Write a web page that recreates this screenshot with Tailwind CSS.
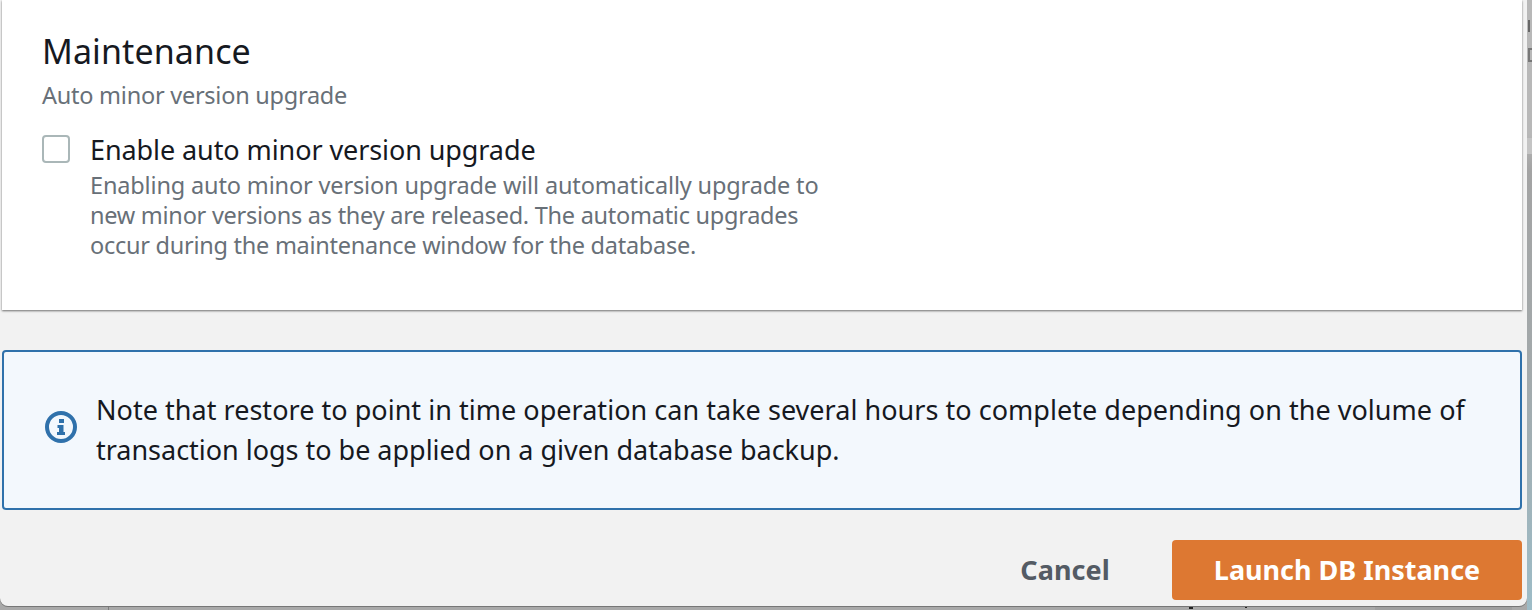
<!DOCTYPE html>
<html>
<head>
<meta charset="utf-8">
<script src="https://cdn.jsdelivr.net/npm/@tailwindcss/browser@4"></script>
</head>
<body class="m-0 overflow-hidden">
<div class="w-[1532px] h-[610px] bg-[#a9a9a9] font-['Noto_Sans',sans-serif] overflow-hidden relative">
  <!-- page behind the dialog, showing at its right and bottom edges -->
  <div class="absolute left-[1527px] top-0 w-[5px] h-[610px] bg-[linear-gradient(to_bottom,#b8b8b8_0%,#b8b8b8_22%,#a3a3a3_28%,#a3a9ab_60%,#9dbcc7_100%)]"></div>
  <div class="absolute left-[1528px] top-[20px] w-[2px] h-[12px] bg-[#666]"></div>
  <div class="absolute left-[1528px] top-[48px] w-[4px] h-[14px] border-2 border-r-0 border-[#777]"></div>
  <div class="absolute left-[1527px] top-[138px] w-[5px] h-[16px] bg-[#c4c4c4]"></div>
  <div class="absolute left-[1375px] top-[606px] w-[137px] h-[4px] bg-[#a0a0a0]"></div>
  <div class="absolute left-[108px] top-[606px] w-px h-[4px] bg-[#7e7e7e]"></div>
  <div class="absolute left-[1189px] top-[606px] w-[4px] h-[3px] bg-[#222]"></div>
  <div class="absolute left-[1245px] top-[606px] w-[2px] h-[2px] bg-[#222]"></div>
  <div class="relative w-[1527px] h-[606px] bg-[#f2f2f2] rounded-b-[8px] shadow-[0_1px_0_#777] pl-[2px] pr-[5px] flex flex-col">
    <section class="h-[310px] w-[1520px] bg-white shadow-[0_1px_2px_rgba(0,0,0,0.55)] pl-[40px] pt-[29px]">
      <h2 class="text-[34px] leading-[44px] text-[#16191f] tracking-[0.1px]">Maintenance</h2>
      <p class="mt-[7px] text-[23.5px] leading-[30px] text-[#687078] tracking-[-0.25px]">Auto minor version upgrade</p>
      <div class="mt-[22px] flex gap-[20px]">
        <div class="mt-[3px] w-[28px] h-[28px] bg-white border-2 border-[#aab7b8] rounded-[4px]"></div>
        <div>
          <div class="text-[27px] leading-[36px] text-[#16191f] tracking-[-0.09px] whitespace-nowrap">Enable auto minor version upgrade</div>
          <p class="mt-[2px] w-[760px] text-[23.5px] leading-[30px] text-[#687078] whitespace-nowrap">
            <span class="block tracking-[-0.15px]">Enabling auto minor version upgrade will automatically upgrade to</span>
            <span class="block tracking-[-0.26px]">new minor versions as they are released. The automatic upgrades</span>
            <span class="block tracking-[-0.26px]">occur during the maintenance window for the database.</span>
          </p>
        </div>
      </div>
    </section>
    <section class="mt-[40px] h-[160px] w-[1520px] bg-[#f3f8fd] border-2 border-[#2f71ab] rounded-[4px] flex items-center pl-[41px]">
      <svg class="w-[32px] h-[32px] mr-[19px] -mt-[6px] shrink-0" viewBox="0 0 32 32" fill="none">
        <circle cx="16" cy="16" r="14" stroke="#2f71ab" stroke-width="4"/>
        <rect x="14" y="8" width="5" height="4" fill="#2f71ab"/>
        <path d="M12.500 14H18.500V21H20V24H12V21H14V17H12.500Z" fill="#2f71ab"/>
      </svg>
      <p class="text-[27px] leading-[40px] text-[#16191f] whitespace-nowrap">
        <span class="block tracking-[0.03px]">Note that restore to point in time operation can take several hours to complete depending on the volume of</span>
        <span class="block tracking-[-0.02px]">transaction logs to be applied on a given database backup.</span>
      </p>
    </section>
    <div class="mt-[30px] flex items-center justify-end w-[1520px]">
      <button class="mr-[62px] text-[27px] font-bold leading-[40px] text-[#545b64] tracking-[0.1px]">Cancel</button>
      <button class="w-[350px] h-[60px] bg-[#dd7832] rounded-[4px] text-[27px] font-bold text-white tracking-[-0.02px]">Launch DB Instance</button>
    </div>
  </div>
</div>
</body>
</html>
